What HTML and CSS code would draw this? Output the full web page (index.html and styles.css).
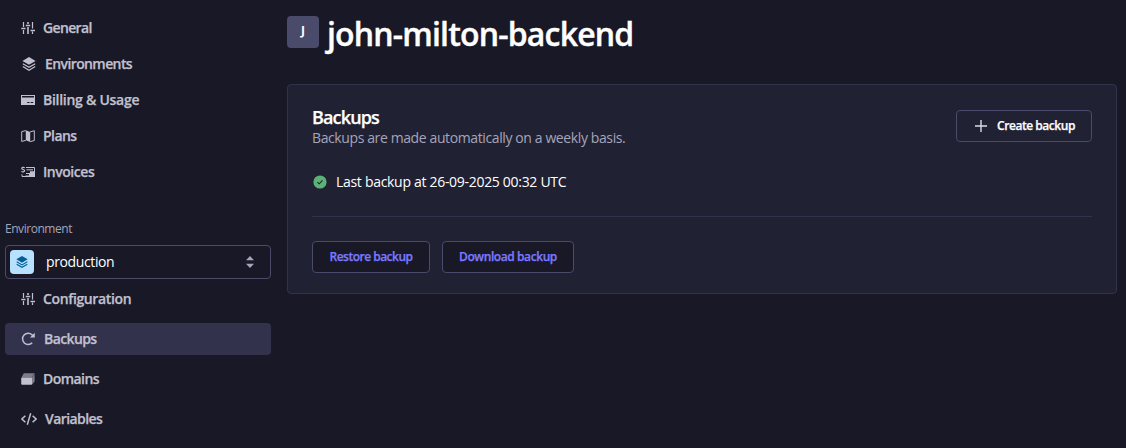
FILE: index.html
```html
<!DOCTYPE html>
<html lang="en">
<head>
<meta charset="utf-8">
<title>john-milton-backend – Backups</title>
<link rel="stylesheet" href="styles.css">
</head>
<body>
<svg class="defs" width="0" height="0">
  <symbol id="sliders" viewBox="0 0 14 14">
    <path d="M2.5 1v5M2.5 9v4M11.5 1v6.5M11.5 10.5V13" fill="none" stroke="currentColor" stroke-width="1.2"/>
    <path d="M7 1v2M7 6v7" fill="none" stroke="currentColor" stroke-width="1.6"/>
    <path d="M.3 7.5h4.2M4.8 4.5h4.4M9.5 9.5H14" fill="none" stroke="currentColor" stroke-width="1.4"/>
  </symbol>
  <symbol id="layers" viewBox="0 0 14 14">
    <path d="M7 0 13.6 3.9 7 7.8.4 3.9z" fill="currentColor"/>
    <path d="M.8 6.7 7 10.3l6.2-3.6M.8 9.6 7 13.2l6.2-3.6" fill="none" stroke="currentColor" stroke-width="1.2"/>
  </symbol>
</svg>
<div class="app">
  <aside class="sidebar">
    <nav class="nav nav-project">
      <a class="item"><svg class="icon" viewBox="0 0 14 14"><use href="#sliders"/></svg><span class="t-general">General</span></a>
      <a class="item wide"><svg class="icon" viewBox="0 0 14 14"><use href="#layers"/></svg><span class="t-envs">Environments</span></a>
      <a class="item"><svg class="icon" viewBox="0 0 14 14"><path d="M0 3V2h14v1zM0 4.6h14V12H0zM6.2 9v1h2.3V9zM9.6 9v1h2.6V9z" fill="currentColor" fill-rule="evenodd"/><path d="M0 2h1v3H0zM13 2h1v3h-1z" fill="currentColor"/></svg><span class="t-billing">Billing &amp; Usage</span></a>
      <a class="item"><svg class="icon" viewBox="0 0 14 14"><path d="M4.8 1.3 9.2 3v10L4.8 11.3z" fill="currentColor"/><path d="M4.8 1.6.7 2.6v9.8l4.1-1M9.2 2.9l4.1-1.2v9.8l-4.1 1.2" fill="none" stroke="currentColor" stroke-width="1"/></svg><span class="t-plans">Plans</span></a>
      <a class="item"><svg class="icon" viewBox="0 0 14 14"><path d="M5 2.5h8.5v9H1V9.4" fill="none" stroke="currentColor" stroke-width="1"/><path d="M5.5 4.8H12" stroke="currentColor" stroke-width="1"/><path d="M9 6.2h5V12H4.5v-1.4H8V9H5V7.9h4z" fill="currentColor"/><path d="M3.7 2.8C3 2.1.7 2.1.7 3.4s3 1.1 3 2.4S1.2 7.2.4 6.4" fill="none" stroke="currentColor" stroke-width="1.1"/></svg><span class="t-invoices">Invoices</span></a>
    </nav>
    <div class="env-label">Environment</div>
    <div class="select">
      <span class="env-badge"><svg width="12" height="12" viewBox="0 0 14 14"><use href="#layers"/></svg></span>
      <span class="env-name">production</span>
      <svg class="carets" width="8" height="12" viewBox="0 0 8 12"><path d="M4 0l4 4.3H0zM4 12 0 7.7h8z" fill="currentColor"/></svg>
    </div>
    <nav class="nav nav-env">
      <a class="item"><svg class="icon" viewBox="0 0 14 14"><use href="#sliders"/></svg><span class="t-config">Configuration</span></a>
      <a class="item mid active"><svg class="icon" viewBox="0 0 14 14"><path d="M11.2 10.8A5.6 5.6 0 1 1 11 2.8l1.3 1.6" fill="none" stroke="currentColor" stroke-width="1.5"/><path d="M13.8.7v4.9H8.9z" fill="currentColor"/></svg><span class="t-backups">Backups</span></a>
      <a class="item"><svg class="icon" viewBox="0 0 14 14"><path d="M.4 5.4 2.8 1.3h10.8v8.3l-2.4 2.8V5.4z" fill="currentColor" opacity=".6"/><path d="M11.2 5.4 13.4 1.6" stroke="#181826" stroke-width=".6" opacity=".6"/><rect x=".2" y="5.4" width="11" height="7.4" rx="1" fill="currentColor"/></svg><span class="t-domains">Domains</span></a>
      <a class="item wide"><svg class="icon code" viewBox="0 0 16 14"><path d="M4.4 3.7.9 7l3.5 3.3M11.6 3.7 15.1 7l-3.5 3.3M9.7 1.2 6.3 12.8" fill="none" stroke="currentColor" stroke-width="1.5"/></svg><span class="t-vars">Variables</span></a>
    </nav>
  </aside>
  <main class="main">
    <header class="title-row">
      <span class="avatar">J</span>
      <h1 class="title">john-milton-backend</h1>
    </header>
    <section class="card">
      <div class="card-head">
        <div class="card-copy">
          <h2 class="card-title">Backups</h2>
          <p class="card-sub">Backups are made automatically on a weekly basis.</p>
        </div>
        <button class="btn create"><svg width="12" height="12" viewBox="0 0 12 12"><path d="M6 0v12M0 6h12" stroke="currentColor" stroke-width="1.4"/></svg><span>Create backup</span></button>
      </div>
      <div class="status">
        <svg width="14" height="14" viewBox="0 0 14 14"><circle cx="7" cy="7" r="6.6" fill="#5cb176"/><path d="M4.4 7.2 6.2 8.8l3.3-3.4" fill="none" stroke="#212134" stroke-width="1.1"/></svg>
        <span class="status-text">Last backup at 26-09-2025 00:32 UTC</span>
      </div>
      <div class="actions">
        <button class="btn secondary restore">Restore backup</button>
        <button class="btn secondary download">Download backup</button>
      </div>
    </section>
  </main>
</div>
</body>
</html>
```
FILE: styles.css
```css
* { box-sizing: border-box; }
body {
  margin: 0;
  background: #181826;
  color: #fff;
  font-family: "Open Sans", "Noto Sans", sans-serif;
  font-size: 14px;
}
.defs { position: absolute; }
.app { display: flex; height: 448px; overflow: hidden; }
.sidebar { width: 271px; padding: 12px 0 0 5px; flex: none; }
.nav { display: flex; flex-direction: column; }
.nav-project { gap: 4px; }
.nav-env { gap: 8px; margin-top: 4px; }
.item {
  display: flex;
  align-items: center;
  gap: 8px;
  height: 32px;
  padding-left: 16px;
  border-radius: 4px;
  color: #c0c0cf;
  font-weight: 600;
  line-height: 20px;
  white-space: nowrap;
}
.item span, .card-title, .btn span, .secondary { -webkit-text-stroke: .25px currentColor; }
.item.mid { gap: 9px; }
.item.wide { gap: 10px; }
.item.wide .icon { margin-left: 1px; margin-right: -1px; }
.item.wide .icon.code { width: 16px; margin-left: 0; margin-right: -2px; }
.item.active { background: #32324d; }
.icon { width: 14px; height: 14px; flex: none; }
.t-general { letter-spacing: -.65px; }
.t-envs { letter-spacing: -.6px; }
.t-billing { letter-spacing: -.27px; }
.t-plans { letter-spacing: -.55px; }
.t-invoices { letter-spacing: -.46px; }
.t-config { letter-spacing: -.37px; }
.t-backups { letter-spacing: -.6px; }
.t-domains { letter-spacing: -.55px; }
.t-vars { letter-spacing: -.58px; }
.env-label {
  margin-top: 32px;
  height: 18px;
  color: #a5a5ba;
  font-size: 12px;
  line-height: 18px;
  letter-spacing: -.46px;
}
.select {
  display: flex;
  align-items: center;
  height: 34px;
  margin-top: 7px;
  padding: 0 16px 0 4px;
  border: 1px solid #4a4a6a;
  border-radius: 4px;
}
.env-badge {
  display: flex;
  align-items: center;
  justify-content: center;
  width: 24px;
  height: 24px;
  border-radius: 4px;
  background: #b8e1ff;
  color: #006096;
}
.env-name { margin-left: 12px; line-height: 20px; letter-spacing: -.38px; }
.carets { margin-left: auto; color: #a5a5ba; }
.main { flex: 1; padding: 14px 9px 0 16px; min-width: 0; }
.title-row { display: flex; align-items: center; height: 40px; gap: 8px; }
.avatar {
  display: flex;
  align-items: center;
  justify-content: center;
  width: 32px;
  height: 32px;
  margin-top: -4px;
  border-radius: 4px;
  background: #4a4a6a;
  font-size: 12px;
  font-weight: 700;
  line-height: 16px;
  padding-bottom: 2px;
}
.title {
  margin: 0;
  font-size: 32px;
  font-weight: 600;
  line-height: 40px;
  letter-spacing: -.82px;
  white-space: nowrap;
  -webkit-text-stroke: .4px currentColor;
}
.card {
  height: 210px;
  margin-top: 30px;
  padding: 24px;
  border: 1px solid #32324d;
  border-radius: 4px;
  background: #212134;
}
.card-head { display: flex; justify-content: space-between; height: 40px; }
.card-title { margin: -3px 0 0; font-size: 18px; font-weight: 600; line-height: 22px; letter-spacing: -.85px; }
.card-sub { margin: 0; color: #a5a5ba; line-height: 20px; letter-spacing: -.39px; white-space: nowrap; }
.btn {
  display: flex;
  align-items: center;
  justify-content: center;
  height: 32px;
  padding: 0;
  border: 1px solid #4a4a6a;
  border-radius: 4px;
  background: #181826;
  color: #fff;
  font: 600 12px/16px "Open Sans", "Noto Sans", sans-serif;
  white-space: nowrap;
}
.create { width: 136px; margin-top: 1px; padding-left: 2px; gap: 10px; background: #212134; letter-spacing: -.46px; }
.create svg { color: #dcdce4; }
.status { display: flex; align-items: center; gap: 9px; height: 67px; padding: 22px 0 23px 1px; }
.status-text { line-height: 20px; letter-spacing: -.3px; white-space: nowrap; }
.actions { display: flex; gap: 12px; padding-top: 24px; border-top: 1px solid #32324d; }
.secondary { color: #7b79ff; }
.restore { width: 118px; letter-spacing: -.5px; }
.download { width: 132px; letter-spacing: -.42px; }
```
